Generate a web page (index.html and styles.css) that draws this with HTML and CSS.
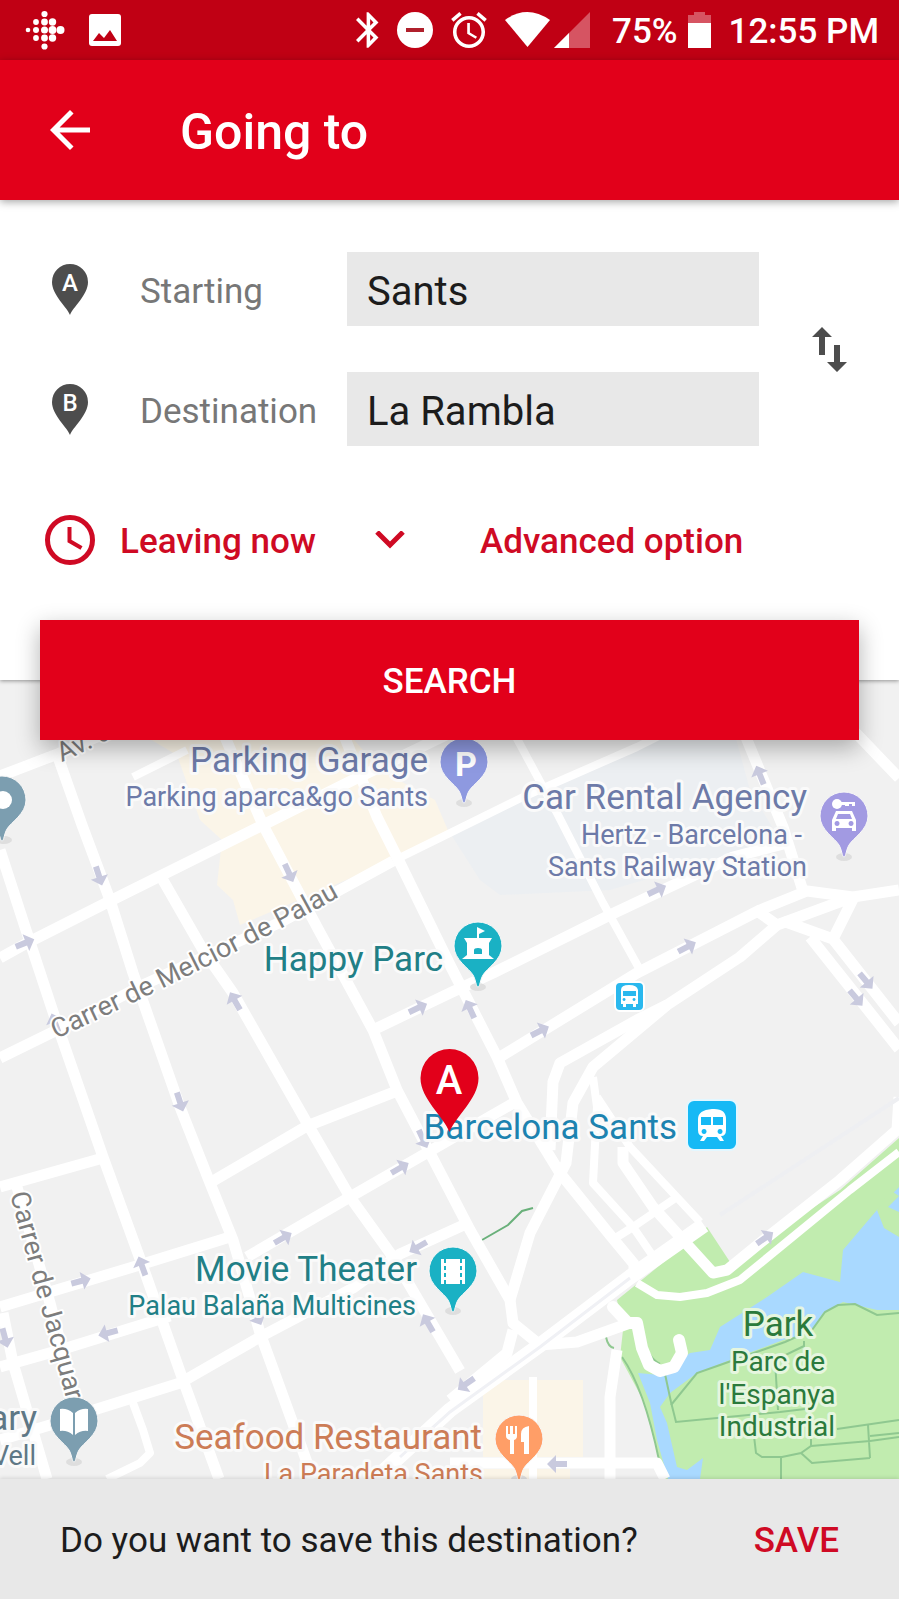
FILE: index.html
```html
<!DOCTYPE html>
<html lang="en">
<head>
<meta charset="utf-8">
<meta name="viewport" content="width=device-width, initial-scale=1">
<title>Going to</title>
<link rel="stylesheet" href="styles.css">
</head>
<body>
<div class="status-bar">
  <div class="status-left">
    <svg class="icon-dots" viewBox="0 0 40 40" aria-hidden="true">
      <g fill="#fff"><circle cx="3" cy="20" r="2.300"/><circle cx="11" cy="12" r="2.900"/><circle cx="11" cy="20" r="3"/><circle cx="11" cy="28" r="2.900"/><circle cx="19.500" cy="4" r="3.100"/><circle cx="19.500" cy="12" r="3.400"/><circle cx="19.500" cy="20" r="3.500"/><circle cx="19.500" cy="28" r="3.400"/><circle cx="19.500" cy="36.500" r="3.100"/><circle cx="27.500" cy="12" r="3.700"/><circle cx="27.500" cy="20" r="3.900"/><circle cx="27.500" cy="28" r="3.700"/><circle cx="35.500" cy="20" r="4"/></g>
    </svg>
    <svg class="icon-image" viewBox="0 0 32 32" aria-hidden="true"><rect width="32" height="32" rx="3" fill="#fff"/><path d="M4 27l6-8 5 5 6-8 7 11z" fill="#c00014"/></svg>
  </div>
  <div class="status-right">
    <svg class="icon-bluetooth" viewBox="5 2 13 20" aria-hidden="true"><path fill="#fff" d="M17.710 7.710L12 2h-1v7.590L6.410 5 5 6.410 10.590 12 5 17.590 6.410 19 11 14.410V22h1l5.710-5.710-4.300-4.290 4.300-4.290zM13 5.830l1.880 1.880L13 9.590V5.830zm1.880 10.460L13 18.170v-3.760l1.880 1.880z"/></svg>
    <svg class="icon-round" viewBox="0 0 36 36" aria-hidden="true"><circle cx="18" cy="18" r="18" fill="#fff"/><path d="M9 18h18" stroke="#b0202c" stroke-width="4"/></svg>
    <svg class="icon-round" viewBox="2 1.800 20 20.200" aria-hidden="true"><path fill="#fff" d="M22 5.720l-4.600-3.860-1.290 1.530 4.600 3.860L22 5.720zM7.880 3.390L6.600 1.860 2 5.710l1.290 1.530 4.590-3.850zM12.500 8H11v6l4.750 2.850.750-1.230-4-2.370V8zM12 4c-4.970 0-9 4.030-9 9s4.020 9 9 9c4.970 0 9-4.030 9-9s-4.030-9-9-9zm0 16c-3.870 0-7-3.130-7-7s3.130-7 7-7 7 3.130 7 7-3.130 7-7 7z"/></svg>
    <div class="signals">
      <svg class="icon-wifi" viewBox="0 0 45 36" aria-hidden="true"><path fill="#fff" d="M0 8Q22-8 45 8L22.500 35z"/></svg>
      <svg class="icon-round" viewBox="0 0 36 36" aria-hidden="true"><path fill="#d65462" d="M36 0v36H0z"/><path fill="#fff" d="M15 21v15H0z"/></svg>
    </div>
    <div class="battery">
      <span>75%</span>
      <svg class="icon-battery" viewBox="0 0 23 36" aria-hidden="true"><path fill="#d65462" d="M6 0h11v3h6v8H0V3h6z"/><path fill="#fff" d="M0 11h23v25H0z"/></svg>
    </div>
    <span>12:55 PM</span>
  </div>
</div>

<header class="app-bar">
  <button class="icon-button" type="button" aria-label="Back"><svg viewBox="0 0 24 24" aria-hidden="true"><path fill="#fff" d="M20 11H7.830l5.590-5.590L12 4l-8 8 8 8 1.410-1.410L7.830 13H20v-2z"/></svg></button>
  <h1>Going to</h1>
</header>

<main>
  <form class="trip" onsubmit="return false">
    <div class="fields">
      <svg class="field-pin" viewBox="0 0 36 52" aria-hidden="true"><path d="M18 52C15 44 0 32 0 19a18 18 0 0 1 36 0C36 32 21 44 18 52z"/><text x="18" y="28">A</text></svg>
      <label for="start">Starting</label>
      <input id="start" type="text" value="Sants">
      <button class="icon-button swap" type="button" aria-label="Swap places"><svg viewBox="0 0 60 60" aria-hidden="true"><path fill="#4d4d4d" d="M23 8l10 10h-7v18h-6V18h-7zM35 26h6v17h7L38 53 28 43h7z"/></svg></button>
      <svg class="field-pin" viewBox="0 0 36 52" aria-hidden="true"><path d="M18 52C15 44 0 32 0 19a18 18 0 0 1 36 0C36 32 21 44 18 52z"/><text x="18" y="28">B</text></svg>
      <label for="destination">Destination</label>
      <input id="destination" type="text" value="La Rambla">
    </div>
    <div class="options">
      <svg class="clock" viewBox="0 0 60 60" aria-hidden="true"><g fill="none" stroke="#cf0a24"><circle cx="30" cy="30" r="22.500" stroke-width="5"/><path d="M29.500 17v14l12 7" stroke-width="4"/></g></svg>
      <div class="when">
        <select aria-label="Departure time"><option>Leaving now</option><option>Leave at</option><option>Arrive by</option></select>
        <svg viewBox="0 0 30 18" aria-hidden="true"><path d="M2 1l13 13L28 1" fill="none" stroke="#cf0a24" stroke-width="5"/></svg>
      </div>
      <a class="advanced" href="#">Advanced option</a>
    </div>
    <button class="search" type="submit">SEARCH</button>
  </form>

  <section class="map" aria-label="Map">
    <svg viewBox="0 680 899 799" preserveAspectRatio="xMidYMid slice">
      <defs>
        <path id="pin" d="M0 41C-2 41-2 34-5 29C-9 22-24 14-24 0A24 24 0 1 1 24 0C24 14 9 22 5 29C2 34 2 41 0 41z"/>
        <path id="arrow" d="M-10-3H1V-9L10 0 1 9V3h-11z"/>
        <path id="melcior" d="M56 1039Q235 956 355 888"/>
        <path id="jacquard" d="M10 1194Q30 1270 42 1312T72 1420"/>
        <path id="avinguda" d="M62 762Q90 749 125 731"/>
      </defs>
      <rect y="680" width="899" height="799" fill="#f1f1f1"/>
      <path fill="#fbf5e8" d="M143 735L177 755 200 820 222 840 217 885 233 900 240 925 393 860 450 835 435 800 380 770 350 735z"/>
      <path fill="#eceff2" d="M450 833L637 747 650 735H735L750 790 780 840 610 890 500 895 480 880z"/>
      <path fill="#fbf5e8" d="M483 1380H583V1457H483zM470 1469H570V1479H470z"/>
      <path fill="#c1ecaf" d="M617 1300L707 1227 730 1262 840 1190 899 1138V1479H665L657 1450 643 1400 620 1357 623 1330z"/>
      <path fill="#a9d9ff" d="M638 1373L660 1375 690 1353 710 1350 720 1327 767 1297 803 1272 840 1282 843 1250 877 1210 899 1187V1310L877 1310 843 1302 823 1313 810 1333 783 1340 730 1360 697 1373 670 1393 660 1407 667 1423 677 1467 687 1470 703 1458 700 1479H668L657 1440 650 1403z"/>
      <path fill="#c1ecaf" d="M877 1210L884 1228 899 1237V1212L888 1207 899 1196 890 1190z"/>

      <g fill="none" stroke="#8fc890" stroke-width="2">
        <path d="M899 1313L877 1315 855 1304 838 1305 825 1312 812 1330 785 1342 720 1365 697 1373 671 1405"/>
        <path d="M665 1374L671 1402 676 1422 780 1412 805 1409M837 1429L899 1420"/>
        <path d="M804 1341V1346L775 1360 778 1410"/>
        <path d="M754 1436L756 1453 762 1457H782L801 1453 811 1446 870 1441 899 1437M801 1453L812 1463 870 1458M781 1457V1479M868 1425L870 1458M811 1430V1446M870 1436L899 1433"/>
        <path d="M622 1357Q644 1388 659 1460M642 1336Q648 1358 660 1364M606 1337Q608 1347 614 1348"/>
      </g>
      <path d="M482 1240L508 1225 522 1211 533 1208" fill="none" stroke="#69b07a" stroke-width="2"/>

      <g fill="none" stroke="#fff" stroke-linejoin="round">
        <g stroke-width="11">
          <path d="M0 776L55 755 118 728M58 757L82 825 110 900 133 973 180 1107 210 1183 233 1240 260 1333 300 1443 313 1479"/>
          <path d="M0 850L25 927 60 1033 103 1157 143 1267 183 1380 219 1479"/>
          <path d="M0 958L27 943 110 901 263 825 353 780 450 733"/>
          <path d="M0 1058L57 1030 143 985 283 921 393 861"/>
          <path d="M160 875L203 950 233 993 307 1123 350 1197 393 1257 460 1371"/>
          <path d="M225 737L263 825 317 927 373 1030 397 1090 430 1153 470 1230 510 1300 513 1323 540 1345"/>
          <path d="M345 738L377 817 400 863 450 965 497 1057 517 1103 560 1173 610 1235 634 1264V1275"/>
          <path d="M247 1257L350 1197 430 1151 517 1101M213 1181L307 1126 397 1091"/>
          <path d="M373 1030L450 993 493 973 610 915 733 857 787 843M500 1057L637 973 760 910 807 891 853 897 899 890"/>
          <path d="M745 735L783 827 802 888M855 732L899 778"/>
          <path d="M853 897L777 925 740 957 667 1005 593 1067 573 1103 566 1163 530 1233 510 1300"/>
          <path d="M760 913L777 925M783 921L833 939 853 899M833 939L899 1023M810 937L899 1049M667 1005L637 1020 560 1063 553 1082 550 1150"/>
          <path d="M899 1097L897 1130 840 1180 760 1243 727 1270 713 1273 683 1240 653 1207 623 1163V1147"/>
          <path d="M0 1187L103 1158M0 1307L133 1267 230 1237M0 1367L60 1350 170 1316M3 1313L13 1363 47 1479M15 1180L50 1303 78 1410"/>
          <path d="M0 1440L50 1425 97 1409 180 1383 260 1337 353 1288 400 1254 466 1224"/>
          <path d="M617 1350L610 1397V1479M450 1463H657L665 1479M513 1330L507 1353 450 1400M540 1345L577 1342 630 1323"/>
        </g>
        <g stroke-width="8">
          <path d="M393 861L450 833 523 797 637 747 665 733M515 735L557 813 603 903 640 970"/>
          <path d="M593 1077L597 1107 593 1183 633 1227 657 1262M597 1097L630 1147 700 1222M617 1237L633 1227 677 1197M133 777L187 750M133 1403L143 1430 150 1453 140 1463 107 1479M533 1377V1479"/>
          <path d="M637 1283L657 1295 680 1297 707 1293 740 1280 850 1190 899 1152"/>
        </g>
        <path d="M704 1225L630 1277 540 1345 450 1410 375 1479" stroke-width="15"/>
        <path d="M613 1307L628 1323H637L642 1348 649 1365 660 1371 674 1367 682 1353 679 1340" stroke-width="12" stroke-linecap="round"/>
      </g>
      <path d="M630 1278L540 1347 450 1412 400 1457" fill="none" stroke="#f0f1f5" stroke-width="3"/>
      <path d="M899 1098L720 1215" fill="none" stroke="#eeeff2" stroke-width="4"/>

      <g fill="#c9cade">
        <use href="#arrow" transform="translate(99 876) rotate(72)"/><use href="#arrow" transform="translate(289 873) rotate(65)"/>
        <use href="#arrow" transform="translate(760 775) rotate(-112)"/><use href="#arrow" transform="translate(657 890) rotate(-25)"/>
        <use href="#arrow" transform="translate(25 943) rotate(-22)"/><use href="#arrow" transform="translate(55 1023) rotate(-110)"/>
        <use href="#arrow" transform="translate(235 1001) rotate(-120)"/><use href="#arrow" transform="translate(180 1102) rotate(72)"/>
        <use href="#arrow" transform="translate(418 1008) rotate(-25)"/><use href="#arrow" transform="translate(423 1139) rotate(65)"/>
        <use href="#arrow" transform="translate(400 1168) rotate(-30)"/><use href="#arrow" transform="translate(470 1009) rotate(-115)"/>
        <use href="#arrow" transform="translate(540 1031) rotate(-27)"/><use href="#arrow" transform="translate(687 947) rotate(-28)"/>
        <use href="#arrow" transform="translate(866 981) rotate(50)"/><use href="#arrow" transform="translate(856 998) rotate(50)"/>
        <use href="#arrow" transform="translate(142 1266) rotate(-110)"/><use href="#arrow" transform="translate(81 1281) rotate(-15)"/>
        <use href="#arrow" transform="translate(5 1338) rotate(75)"/><use href="#arrow" transform="translate(108 1333) rotate(165)"/>
        <use href="#arrow" transform="translate(283 1238) rotate(-30)"/><use href="#arrow" transform="translate(418 1247) rotate(150)"/>
        <use href="#arrow" transform="translate(428 1323) rotate(-120)"/><use href="#arrow" transform="translate(257 1316) rotate(65)"/>
        <use href="#arrow" transform="translate(466 1384) rotate(145)"/><use href="#arrow" transform="translate(765 1238) rotate(-35)"/>
        <use href="#arrow" transform="translate(557 1464) rotate(180)"/>
      </g>

      <g class="street">
        <text><textPath href="#avinguda">Av. d</textPath></text>
        <text><textPath href="#melcior">Carrer de Melcior de Palau</textPath></text>
        <text><textPath href="#jacquard">Carrer de Jacquar</textPath></text>
      </g>

      <g fill="#dedede"><ellipse cx="464" cy="803" rx="8" ry="4"/><ellipse cx="844" cy="857" rx="8" ry="4"/><ellipse cx="478" cy="987" rx="8" ry="4"/><ellipse cx="74" cy="1462" rx="8" ry="4"/><ellipse cx="453" cy="1311" rx="8" ry="4"/><ellipse cx="519" cy="1479" rx="8" ry="4"/><ellipse cx="4" cy="840" rx="8" ry="4"/></g>
      <g stroke="#f8f8f8" stroke-width="1">
        <use href="#pin" x="464" y="762" fill="#8e99e0"/>
        <use href="#pin" x="844" y="816" fill="#a29ae2"/>
        <use href="#pin" x="478" y="946" fill="#1ab1c4"/>
        <use href="#pin" x="74" y="1421" fill="#7c9eb0"/>
        <use href="#pin" x="453" y="1271" fill="#1ab1c4"/>
        <use href="#pin" x="519" y="1439" fill="#ff9e67"/>
        <use href="#pin" x="2" y="800" fill="#7c9eb0"/>
      </g>
      <circle cx="3" cy="800" r="9" fill="#fff"/>
      <text class="parking-letter" x="466" y="776">P</text>
      <g transform="translate(844 816)" fill="#fff">
        <circle cx="-7" cy="-12" r="5"/><path d="M-4-14H11v4H8v-2H5v2H1v-1h-5z"/>
        <path fill-rule="evenodd" d="M-8-5H8L12 4V15H8V12H-8V15H-12V4zM-6-2L-8 3H8L6-2zM-7 5a2.500 2.500 0 1 0 .1 0zM7 5a2.500 2.500 0 1 0 .1 0z"/>
      </g>
      <g transform="translate(478 946)" fill="#fff">
        <path d="M-1-19l8 4-6 3v4h-2z"/><path fill-rule="evenodd" d="M-14-8H14L11-3V9l5 4H-16l5-4V-3zM-4 8H4V4Q4 2 0 2T-4 4z"/>
      </g>
      <path fill="#fff" d="M60 1409q7-1 13 4v22q-6-5-13-4zM88 1409q-7-1-13 4v22q6-5 13-4z"/>
      <g transform="translate(453 1271)"><path fill="#fff" d="M-12-12H12V13H-12z"/><path d="M-8-12V13M8-12V13" stroke="#1ab1c4" stroke-width="2" stroke-dasharray="4 3"/></g>
      <g transform="translate(519 1439)" fill="#fff"><path d="M-13-13h2v8h2v-8h3v8h2v-8h2v10q0 3-3 4v14h-4V1q-4-1-4-4zM10-13v28H5V3H2V-5Q2-12 10-13z"/></g>

      <g class="poi">
        <text x="428" y="772" fill="#6d7aa8">Parking Garage</text><text class="small" x="428" y="806" fill="#6d7aa8">Parking aparca&amp;go Sants</text>
        <text x="807" y="809" fill="#6d7aa8">Car Rental Agency</text><text class="small" x="802" y="844" fill="#6d7aa8">Hertz - Barcelona -</text><text class="small" x="807" y="876" fill="#6d7aa8">Sants Railway Station</text>
        <text x="443" y="971" fill="#217f86">Happy Parc</text>
        <text x="677" y="1139" fill="#1d83b0">Barcelona Sants</text>
        <text x="417" y="1281" fill="#217f86">Movie Theater</text><text class="small" x="416" y="1315" fill="#217f86">Palau Balaña Multicines</text>
        <text x="482" y="1449" fill="#cc7c56">Seafood Restaurant</text><text class="small" x="483" y="1483" fill="#cc7c56">La Paradeta Sants</text>
        <text x="37" y="1430" fill="#5f7886">ary</text><text class="small" x="36" y="1465" fill="#5f7886">Vell</text>
      </g>
      <g class="poi park">
        <text x="778" y="1336">Park</text><text class="small" x="778" y="1371">Parc de</text><text class="small" x="777" y="1404">l'Espanya</text><text class="small" x="777" y="1436">Industrial</text>
      </g>

      <rect x="615" y="982" width="29" height="29" rx="5" fill="#2ab8ee" stroke="#fff" stroke-width="2"/>
      <path fill="#fff" fill-rule="evenodd" d="M621 990q0-5 8-5t9 5v14h-2v3h-3v-3h-7v3h-3v-3h-2zM623 991v5h13v-5zM624 998a1.500 1.500 0 1 0 .1 0zM634 998a1.500 1.500 0 1 0 .1 0z"/>
      <rect x="687" y="1100" width="50" height="50" rx="7" fill="#16b9f5" stroke="#e3f7ff" stroke-width="2"/>
      <path fill="#fff" fill-rule="evenodd" d="M698 1119q0-9 14-10t14 10v11q0 6-5 6l3 5h-4l-3-4h-10l-3 4h-4l3-5q-5 0-5-6zM701 1117v8h10v-8zM713 1117v8h10v-8zM704 1129a2.500 2.500 0 1 0 .1 0zM720 1129a2.500 2.500 0 1 0 .1 0z"/>

      <path fill="#e2001a" d="M449.500 1132C444 1117 420.500 1099 420.500 1078a29 29 0 0 1 58 0C478.500 1099 455 1117 449.500 1132z"/>
      <text class="marker-letter" x="449" y="1094">A</text>
    </svg>
  </section>
</main>

<footer class="save-bar">
  <p>Do you want to save this destination?</p>
  <button type="button">SAVE</button>
</footer>
</body>
</html>
```
FILE: styles.css
```css
* { box-sizing: border-box; }

body {
  margin: 0;
  min-height: 100vh;
  display: flex;
  flex-direction: column;
  background: #e8e8e8;
  color: #1c1c1c;
  font-family: Roboto, "Liberation Sans", sans-serif;
  font-size: 35px;
}

svg { display: block; }
button, input, select { font: inherit; border: 0; border-radius: 0; padding: 0; margin: 0; }
button { background: none; cursor: pointer; }

.status-bar {
  display: flex;
  align-items: center;
  justify-content: space-between;
  height: 60px;
  padding: 0 20px 0 25px;
  background: #c00014;
  color: #fff;
  font-weight: 500;
}
.status-bar span { padding-top: 2px; }
.status-left, .status-right, .battery, .signals { display: flex; align-items: center; }
.status-left { gap: 24px; }
.status-right { gap: 18px; }
.battery { gap: 10px; margin-left: 4px; }
.signals { gap: 4px; }
.icon-dots { width: 40px; height: 40px; }
.icon-image { width: 32px; height: 32px; }
.icon-bluetooth { width: 23px; height: 36px; }
.icon-round { width: 36px; height: 36px; }
.icon-wifi { width: 45px; height: 36px; }
.icon-battery { width: 23px; height: 36px; }

.app-bar {
  position: relative;
  z-index: 2;
  display: flex;
  align-items: center;
  gap: 80px;
  height: 140px;
  padding: 0 40px;
  background: #e2001a;
  color: #fff;
  box-shadow: 0 2px 8px rgba(0, 0, 0, .35);
}
.app-bar h1 { margin: 0; padding-top: 4px; font-size: 50px; font-weight: 500; line-height: 60px; }
.icon-button { width: 60px; height: 60px; }
.icon-button svg { width: 60px; height: 60px; }

.trip {
  position: relative;
  z-index: 1;
  padding: 52px 40px 0;
  background: #fff;
  box-shadow: 0 1px 4px rgba(0, 0, 0, .4);
}
.fields {
  display: grid;
  grid-template-columns: 100px 207px 1fr 100px;
  grid-auto-rows: 74px;
  row-gap: 46px;
  align-items: center;
}
.field-pin { width: 36px; height: 52px; margin-left: 12px; fill: #4d4d4d; }
.field-pin text { fill: #fff; font-size: 24px; font-weight: 500; text-anchor: middle; }
.fields label { padding-top: 4px; color: #777; }
.fields input {
  width: 100%;
  min-width: 0;
  height: 74px;
  padding: 4px 20px 0;
  background: #e8e8e8;
  color: #1c1c1c;
  font-size: 40px;
}
.swap { grid-column: 4; grid-row: 1 / span 2; justify-self: end; }

.options {
  display: flex;
  align-items: center;
  height: 60px;
  margin-top: 64px;
  color: #cf0a24;
  font-weight: 500;
}
.clock { width: 60px; height: 60px; margin-right: 20px; }
.when { display: grid; align-items: center; width: 300px; margin-right: 60px; }
.when select, .when svg { grid-area: 1 / 1; }
.when select { appearance: none; width: 100%; height: 60px; padding-top: 2px; background: none; color: inherit; }
.when svg { width: 30px; height: 18px; justify-self: end; margin-right: 15px; pointer-events: none; }
.advanced { padding-top: 2px; color: inherit; text-decoration: none; white-space: nowrap; }

.search {
  display: block;
  width: 100%;
  height: 120px;
  margin: 50px 0 -60px;
  padding-top: 2px;
  background: #e2001a;
  color: #fff;
  font-weight: 500;
  box-shadow: 0 8px 22px rgba(0, 0, 0, .3);
}
.trip::after { content: ""; display: table; }

.map svg { width: 100%; height: auto; }
.map text { paint-order: stroke; stroke-linejoin: round; }
.street text { font-size: 27px; fill: #7d7d7d; stroke: #fff; stroke-width: 4px; }
.poi text { font-size: 35px; text-anchor: end; stroke: #fafafa; stroke-width: 6px; }
.poi .small { font-size: 27px; }
.park text { fill: #2b7a3c; text-anchor: middle; stroke: #e6f6df; }
.park .small { font-size: 28px; }
.map .parking-letter { fill: #fff; font-size: 34px; font-weight: 700; text-anchor: middle; }
.map .marker-letter { fill: #fff; font-size: 40px; font-weight: 500; text-anchor: middle; }

.save-bar {
  position: relative;
  z-index: 1;
  display: flex;
  align-items: center;
  justify-content: space-between;
  height: 120px;
  padding: 2px 60px 0;
  background: #e8e8e8;
  box-shadow: 0 -1px 4px rgba(0, 0, 0, .12);
}
.save-bar p { margin: 0; }
.save-bar button { color: #cf0a24; font-weight: 500; }
```
